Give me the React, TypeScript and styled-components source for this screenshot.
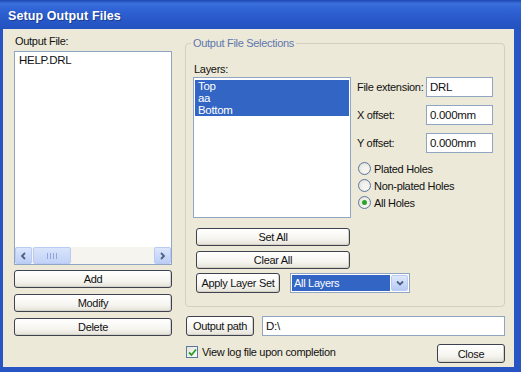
import React from "react";
import styled, { createGlobalStyle, css } from "styled-components";

const GlobalStyle = createGlobalStyle`
  html, body { margin: 0; padding: 0; width: 521px; height: 372px; overflow: hidden; background: #2553c4; }
  *, *::before, *::after { box-sizing: border-box; }
`;

const Window = styled.div`
  width: 521px;
  height: 372px;
  display: flex;
  flex-direction: column;
  background: #2755c3;
  font-family: "Liberation Sans", Arial, sans-serif;
  font-size: 11px;
  letter-spacing: -0.3px;
  color: #111;
`;

const TitleBar = styled.div`
  height: 29px;
  flex: none;
  display: flex;
  align-items: center;
  padding: 2px 0 0 8px;
  background: linear-gradient(180deg, #1d48b4 0%, #3a6fdc 12%, #2f62d4 35%, #2858c8 70%, #2352c0 100%);
  color: #fff;
  font-size: 12.5px;
  font-weight: bold;
  letter-spacing: 0.1px;
  text-shadow: 1px 1px 0 #1a3c90;
`;

const Body = styled.div`
  flex: 1;
  margin: 0 7px 5px 3px;
  background: #ece9d8;
  display: flex;
  gap: 13px;
  padding: 6px 9px 0 11px;
`;

const LeftCol = styled.div`
  width: 158px;
  display: flex;
  flex-direction: column;
`;

const RightCol = styled.div`
  flex: 1;
  display: flex;
  flex-direction: column;
`;

const Label = styled.div<{ $indent?: number }>`
  height: 13px;
  line-height: 13px;
  padding-left: ${(p) => p.$indent ?? 1}px;
  white-space: nowrap;
`;

const ListBox = styled.div<{ $h: number; $mt?: number }>`
  height: ${(p) => p.$h}px;
  margin-top: ${(p) => p.$mt ?? 3}px;
  border: 1px solid #8fa5c2;
  background: #fff;
  display: flex;
  flex-direction: column;
`;

const ListItems = styled.div`
  flex: 1;
  padding: 2px 1px;
`;

const ListItem = styled.div<{ $selected?: boolean }>`
  height: 12px;
  line-height: 12px;
  padding-left: 3px;
  font-size: 11.5px;
  ${(p) =>
    p.$selected &&
    css`
      background: #3366c4;
      color: #fff;
    `}
`;

const HScroll = styled.div`
  height: 17px;
  display: flex;
  align-items: stretch;
  background: #f5f4ee;
`;

const ScrollBtn = styled.div`
  width: 17px;
  border: 1px solid #b9cbf3;
  border-radius: 2px;
  background: linear-gradient(180deg, #dce6fc, #bccef6);
  display: flex;
  align-items: center;
  justify-content: center;
`;

const ScrollTrack = styled.div`
  flex: 1;
  padding-left: 1px;
  display: flex;
`;

const Thumb = styled.div`
  width: 38px;
  border: 1px solid #b9cbf3;
  border-radius: 2px;
  background: linear-gradient(180deg, #d9e4fb, #c2d2f7);
  display: flex;
  align-items: center;
  justify-content: center;
  gap: 2px;
`;

const Grip = styled.span`
  width: 1px;
  height: 6px;
  background: #8fa6dc;
`;

const Button = styled.button<{ $w?: number; $h?: number; $mt?: number }>`
  width: ${(p) => (p.$w ? `${p.$w}px` : "100%")};
  height: ${(p) => p.$h ?? 18}px;
  margin-top: ${(p) => p.$mt ?? 0}px;
  flex: none;
  padding: 0;
  border: 1px solid #3e4150;
  border-radius: 3px;
  background: linear-gradient(180deg, #ffffff 0%, #f6f5f0 60%, #e4e2d8 100%);
  box-shadow: inset -1px -1px 0 #d6d3c6;
  font-family: "Liberation Sans", Arial, sans-serif;
  font-size: 11px;
  letter-spacing: -0.3px;
  color: #111;
  text-align: center;
  white-space: nowrap;
`;

const GroupBox = styled.div`
  position: relative;
  margin-top: 8px;
  height: 264px;
  border: 1px solid #d2d0c0;
  border-radius: 4px;
  padding: 19px 0 0 7px;
  display: flex;
  flex-direction: column;
`;

const Legend = styled.span`
  position: absolute;
  top: -8px;
  left: 5px;
  padding: 0 2px;
  background: #ece9d8;
  color: #5f77ad;
  line-height: 14px;
`;

const TopRow = styled.div`
  display: flex;
  gap: 6px;
`;

const LayersCol = styled.div`
  width: 158px;
  display: flex;
  flex-direction: column;
`;

const FieldsCol = styled.div`
  padding-top: 14px;
  display: flex;
  flex-direction: column;
  gap: 8px;
`;

const FieldRow = styled.div`
  display: flex;
  align-items: center;
  height: 20px;
`;

const FieldLabel = styled.span`
  width: 69px;
  white-space: nowrap;
`;

const TextBox = styled.div<{ $w?: number }>`
  width: ${(p) => (p.$w ? `${p.$w}px` : "auto")};
  flex: ${(p) => (p.$w ? "none" : "1")};
  height: 20px;
  border: 1px solid #8fa5c2;
  background: #fff;
  padding: 0 3px;
  line-height: 18px;
  font-size: 11.5px;
`;

const RadioGroup = styled.div`
  margin-top: -1px;
  display: flex;
  flex-direction: column;
`;

const RadioRow = styled.label`
  height: 17px;
  display: flex;
  align-items: center;
  gap: 3px;
  padding-left: 1px;
`;

const RadioCircle = styled.span<{ $checked?: boolean }>`
  width: 13px;
  height: 13px;
  border-radius: 50%;
  border: 1px solid #5d78a0;
  background: radial-gradient(circle at 60% 60%, #f4f3ee 30%, #dcd9cd 100%);
  display: flex;
  align-items: center;
  justify-content: center;
  &::after {
    content: "";
    width: 5px;
    height: 5px;
    border-radius: 50%;
    background: ${(p) => (p.$checked ? "#2aa32a" : "transparent")};
  }
`;

const ButtonStack = styled.div`
  margin-top: 10px;
  padding-left: 3px;
  display: flex;
  flex-direction: column;
  gap: 5px;
`;

const ApplyRow = styled.div`
  margin-top: -1px;
  display: flex;
  gap: 10px;
  align-items: center;
`;

const Select = styled.div`
  width: 120px;
  flex: none;
  height: 20px;
  border: 1px solid #8fa5c2;
  background: #fff;
  display: flex;
  padding: 1px;
`;

const SelectValue = styled.div`
  flex: 1;
  background: #3366c4;
  color: #fff;
  line-height: 16px;
  padding-left: 2px;
  white-space: nowrap;
`;

const SelectArrow = styled.div`
  width: 17px;
  margin-left: 1px;
  border: 1px solid #b9cbf3;
  border-radius: 2px;
  background: linear-gradient(180deg, #dfe8fd, #b7caf5);
  display: flex;
  align-items: center;
  justify-content: center;
`;

const PathRow = styled.div`
  margin-top: 9px;
  padding-left: 1px;
  display: flex;
  gap: 8px;
`;

const BottomRow = styled.div`
  margin-top: 8px;
  padding-left: 1px;
  display: flex;
  align-items: flex-start;
  justify-content: space-between;
`;

const CheckLabel = styled.label`
  display: flex;
  align-items: center;
  gap: 4px;
  height: 14px;
  margin-top: 1px;
`;

const CheckBox = styled.span`
  width: 12px;
  height: 12px;
  border: 1px solid #5d78a0;
  background: linear-gradient(135deg, #e6e4da, #fbfbf8);
  display: flex;
  align-items: center;
  justify-content: center;
`;

const Chevron = ({ dir, color = "#4d6185" }: { dir: "left" | "right" | "down"; color?: string }) => {
  const d =
    dir === "left" ? "M5 1 L2 4 L5 7" : dir === "right" ? "M2 1 L5 4 L2 7" : "M1 2.5 L4 5.5 L7 2.5";
  return (
    <svg width="8" height="8" viewBox="0 0 8 8">
      <path d={d} fill="none" stroke={color} strokeWidth="1.8" />
    </svg>
  );
};

export default function App() {
  return (
    <>
      <GlobalStyle />
      <Window>
        <TitleBar>Setup Output Files</TitleBar>
        <Body>
          <LeftCol>
            <Label>Output File:</Label>
            <ListBox $h={214}>
              <ListItems>
                <ListItem>HELP.DRL</ListItem>
              </ListItems>
              <HScroll>
                <ScrollBtn>
                  <Chevron dir="left" />
                </ScrollBtn>
                <ScrollTrack>
                  <Thumb>
                    <Grip />
                    <Grip />
                    <Grip />
                    <Grip />
                  </Thumb>
                </ScrollTrack>
                <ScrollBtn>
                  <Chevron dir="right" />
                </ScrollBtn>
              </HScroll>
            </ListBox>
            <Button $mt={5}>Add</Button>
            <Button $mt={6}>Modify</Button>
            <Button $mt={6}>Delete</Button>
          </LeftCol>
          <RightCol>
            <GroupBox>
              <Legend>Output File Selections</Legend>
              <TopRow>
                <LayersCol>
                  <Label>Layers:</Label>
                  <ListBox $h={141} $mt={1}>
                    <ListItems>
                      <ListItem $selected>Top</ListItem>
                      <ListItem $selected>aa</ListItem>
                      <ListItem $selected>Bottom</ListItem>
                    </ListItems>
                  </ListBox>
                </LayersCol>
                <FieldsCol>
                  <FieldRow>
                    <FieldLabel>File extension:</FieldLabel>
                    <TextBox $w={67}>DRL</TextBox>
                  </FieldRow>
                  <FieldRow>
                    <FieldLabel>X offset:</FieldLabel>
                    <TextBox $w={67}>0.000mm</TextBox>
                  </FieldRow>
                  <FieldRow>
                    <FieldLabel>Y offset:</FieldLabel>
                    <TextBox $w={67}>0.000mm</TextBox>
                  </FieldRow>
                  <RadioGroup>
                    <RadioRow>
                      <RadioCircle />
                      Plated Holes
                    </RadioRow>
                    <RadioRow>
                      <RadioCircle />
                      Non-plated Holes
                    </RadioRow>
                    <RadioRow>
                      <RadioCircle $checked />
                      All Holes
                    </RadioRow>
                  </RadioGroup>
                </FieldsCol>
              </TopRow>
              <ButtonStack>
                <Button $w={154}>Set All</Button>
                <Button $w={154}>Clear All</Button>
                <ApplyRow>
                  <Button $w={84} $h={20}>
                    Apply Layer Set
                  </Button>
                  <Select>
                    <SelectValue>All Layers</SelectValue>
                    <SelectArrow>
                      <Chevron dir="down" />
                    </SelectArrow>
                  </Select>
                </ApplyRow>
              </ButtonStack>
            </GroupBox>
            <PathRow>
              <Button $w={68} $h={20}>
                Output path
              </Button>
              <TextBox>D:\</TextBox>
            </PathRow>
            <BottomRow>
              <CheckLabel>
                <CheckBox>
                  <svg width="9" height="9" viewBox="0 0 9 9">
                    <path d="M1 4.5 L3.5 7 L8 1.5" fill="none" stroke="#2a9d2a" strokeWidth="1.8" />
                  </svg>
                </CheckBox>
                View log file upon completion
              </CheckLabel>
              <Button $w={68} $h={19}>
                Close
              </Button>
            </BottomRow>
          </RightCol>
        </Body>
      </Window>
    </>
  );
}
